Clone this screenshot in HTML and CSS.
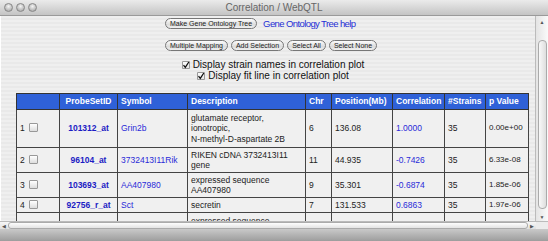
FILE: index.html
```html
<!DOCTYPE html>
<html lang="en">
  <head>
    <meta charset="UTF-8" />
    <title>Correlation / WebQTL</title>
    <link rel="stylesheet" href="styles.css">
  </head>
  <body>
    <div class="window">

      <div class="titlebar">
        <div class="lights"><span></span><span></span><span></span></div>
        <div class="title">Correlation / WebQTL</div>
        <div></div>
      </div>

      <div class="main">
        <div class="page">

          <div class="toolrow">
            <button class="aqua">Make Gene Ontology Tree</button>
            <a href="#" class="help">Gene Ontology Tree help</a>
          </div>
          <div class="toolrow second">
            <button class="aqua">Multiple Mapping</button>
            <button class="aqua">Add Selection</button>
            <button class="aqua">Select All</button>
            <button class="aqua">Select None</button>
          </div>

          <div class="options">
            <div class="opt"><span class="cb"><svg viewBox="0 0 8 8" width="8" height="8"><path d="M1.5 4.2 L3.3 6.3 L6.8 1" fill="none" stroke="#111" stroke-width="1.3"/></svg></span>Display strain names in correlation plot</div>
            <div class="opt"><span class="cb"><svg viewBox="0 0 8 8" width="8" height="8"><path d="M1.5 4.2 L3.3 6.3 L6.8 1" fill="none" stroke="#111" stroke-width="1.3"/></svg></span>Display fit line in correlation plot</div>
          </div>

          <table class="results">
            <colgroup>
              <col style="width:43px"><col style="width:58px"><col style="width:70px">
              <col style="width:118px"><col style="width:26px"><col style="width:61px">
              <col style="width:52px"><col style="width:41px"><col style="width:43px">
            </colgroup>
            <tr>
              <th></th><th class="c">ProbeSetID</th><th>Symbol</th><th>Description</th><th>Chr</th>
              <th>Position(Mb)</th><th>Correlation</th><th>#Strains</th><th>p Value</th>
            </tr>
            <tr class="first">
              <td>1 <span class="box"></span></td>
              <td class="c"><a href="#" class="probe">101312_at</a></td>
              <td><a href="#">Grin2b</a></td>
              <td>glutamate receptor,<br>ionotropic,<br>N-methyl-D-aspartate 2B</td>
              <td>6</td><td>136.08</td><td><a href="#">1.0000</a></td><td>35</td><td>0.00e+00</td>
            </tr>
            <tr>
              <td>2 <span class="box"></span></td>
              <td class="c"><a href="#" class="probe">96104_at</a></td>
              <td><a href="#">3732413I11Rik</a></td>
              <td>RIKEN cDNA 3732413I11<br>gene</td>
              <td>11</td><td>44.935</td><td><a href="#">-0.7426</a></td><td>35</td><td>6.33e-08</td>
            </tr>
            <tr>
              <td>3 <span class="box"></span></td>
              <td class="c"><a href="#" class="probe">103693_at</a></td>
              <td><a href="#">AA407980</a></td>
              <td>expressed sequence<br>AA407980</td>
              <td>9</td><td>35.301</td><td><a href="#">-0.6874</a></td><td>35</td><td>1.85e-06</td>
            </tr>
            <tr>
              <td>4 <span class="box"></span></td>
              <td class="c"><a href="#" class="probe">92756_r_at</a></td>
              <td><a href="#">Sct</a></td>
              <td>secretin</td>
              <td>7</td><td>131.533</td><td><a href="#">0.6863</a></td><td>35</td><td>1.97e-06</td>
            </tr>
            <tr class="tall">
              <td></td><td></td><td></td>
              <td class="top">expressed sequence</td>
              <td></td><td></td><td></td><td></td><td></td>
            </tr>
          </table>

        </div>
        <div class="vscroll">
          <span class="arrow up">&#9650;</span>
          <span class="thumb"></span>
          <span class="arrow">&#9660;</span>
        </div>
      </div>

      <div class="hscroll">
        <span class="arrow">&#9664;</span>
        <span class="thumb"></span>
        <span class="arrow">&#9654;</span>
        <span class="corner"></span>
      </div>
      <div class="bottombar"></div>

    </div>
  </body>
</html>
```

FILE: styles.css
```css
body {
  margin: 0;
  font-family: "Liberation Sans", Arial, sans-serif;
  overflow: hidden;
}

.window {
  width: 548px;
  height: 241px;
  display: flex;
  flex-direction: column;
  background: #a9a9a9;
}

/* title bar */
.titlebar {
  height: 15px;
  display: grid;
  grid-template-columns: 1fr auto 1fr;
  align-items: center;
  background: linear-gradient(#ebebeb, #c4c4c4);
  border-bottom: 1px solid #9a9a9a;
}
.lights {
  display: flex;
  gap: 3px;
  padding-left: 4px;
}
.lights span {
  width: 9px;
  height: 9px;
  border-radius: 50%;
  background: radial-gradient(circle at 50% 35%, #f4f4f4, #9c9c9c);
  border: 1px solid #888;
  box-sizing: border-box;
}
.title {
  font-size: 10px;
  color: #666;
}

/* main area */
.main {
  flex: 1;
  display: flex;
  min-height: 0;
}
.page {
  flex: 1;
  overflow: hidden;
  background: repeating-linear-gradient(#efefef 0 2px, #e9e9e9 2px 4px);
  border-left: 1px solid #fff;
}

.toolrow {
  display: flex;
  align-items: center;
  gap: 3px;
  padding-left: 164px;
  padding-top: 2px;
}
.toolrow.second {
  padding-top: 11px;
}
button.aqua {
  height: 11px;
  padding: 0 4px;
  font-family: "Liberation Sans", Arial, sans-serif;
  font-size: 7px;
  color: #222;
  line-height: 9px;
  border: 1px solid #777;
  border-radius: 6px;
  background: linear-gradient(#fdfdfd, #dcdcdc 60%, #f0f0f0);
}
a.help {
  margin-left: 3px;
  font-size: 9.5px;
  letter-spacing: -0.6px;
  color: #1f2fd6;
  text-decoration: none;
}

.options {
  padding-top: 8px;
  padding-left: 10px;
  font-size: 10px;
  color: #111;
  line-height: 11px;
}
.opt {
  display: flex;
  justify-content: center;
  align-items: center;
  gap: 3px;
}
.cb {
  width: 8px;
  height: 8px;
  display: inline-flex;
  border-radius: 1px;
  background: linear-gradient(#fff, #e2e2e2);
  box-shadow: inset 0 0 0 1px #999;
}

/* result table */
.results {
  margin: 12px 0 0 15px;
  width: 512px;
  table-layout: fixed;
  border-collapse: collapse;
  font-size: 8.5px;
  line-height: 10.5px;
  color: #222;
}
.results th {
  background: #2f61d8;
  color: #fff;
  font-weight: bold;
  text-align: left;
  white-space: nowrap;
  padding: 2px 3px;
  border: 1px solid #333;
}
.results td {
  background: #f0f0f0;
  padding: 1.5px 3px;
  border: 1px solid #444;
  vertical-align: middle;
}
.results tr.first td {
  padding: 3px;
}
.results td:nth-child(n+5) {
  white-space: nowrap;
}
.results td:last-child {
  font-size: 8px;
  padding-right: 1px;
}
.results .c {
  text-align: center;
}
.results td.top {
  vertical-align: top;
  padding-top: 3px;
}
.results tr.tall td {
  height: 33px;
}
.results a {
  color: #2a2ad8;
  text-decoration: none;
}
.results a.probe {
  color: #1c1cc4;
  font-weight: bold;
}
.box {
  display: inline-block;
  width: 7px;
  height: 7px;
  margin-left: 2px;
  vertical-align: -1px;
  border: 1px solid #999;
  border-radius: 1px;
  background: linear-gradient(#fff, #ddd);
}

/* scrollbars */
.vscroll {
  width: 12px;
  display: flex;
  flex-direction: column;
  align-items: center;
  background: linear-gradient(90deg, #e4e4e4, #fafafa);
  border-left: 1px solid #bbb;
}
.vscroll .thumb {
  flex: 1;
  width: 7px;
  margin: 14px 0 4px;
  border-radius: 4px;
  background: linear-gradient(90deg, #f8f8f8, #dedede);
  border: 1px solid #aaa;
}
.arrow {
  font-size: 5px;
  color: #555;
  line-height: 8px;
}
.vscroll .up {
  margin-top: 2px;
}
.hscroll {
  height: 7px;
  display: flex;
  align-items: center;
  gap: 2px;
  padding-left: 2px;
  background: linear-gradient(#f7f7f7, #e0e0e0);
  border-top: 1px solid #bbb;
}
.hscroll .thumb {
  flex: 1;
  height: 5px;
  border-radius: 3px;
  border: 1px solid #aaa;
  background: linear-gradient(#fdfdfd, #e3e3e3);
}
.hscroll .corner {
  width: 12px;
  height: 7px;
  background: #ececec;
}
.bottombar {
  height: 12px;
  background: linear-gradient(#c9c9c9, #9d9d9d);
}
```
